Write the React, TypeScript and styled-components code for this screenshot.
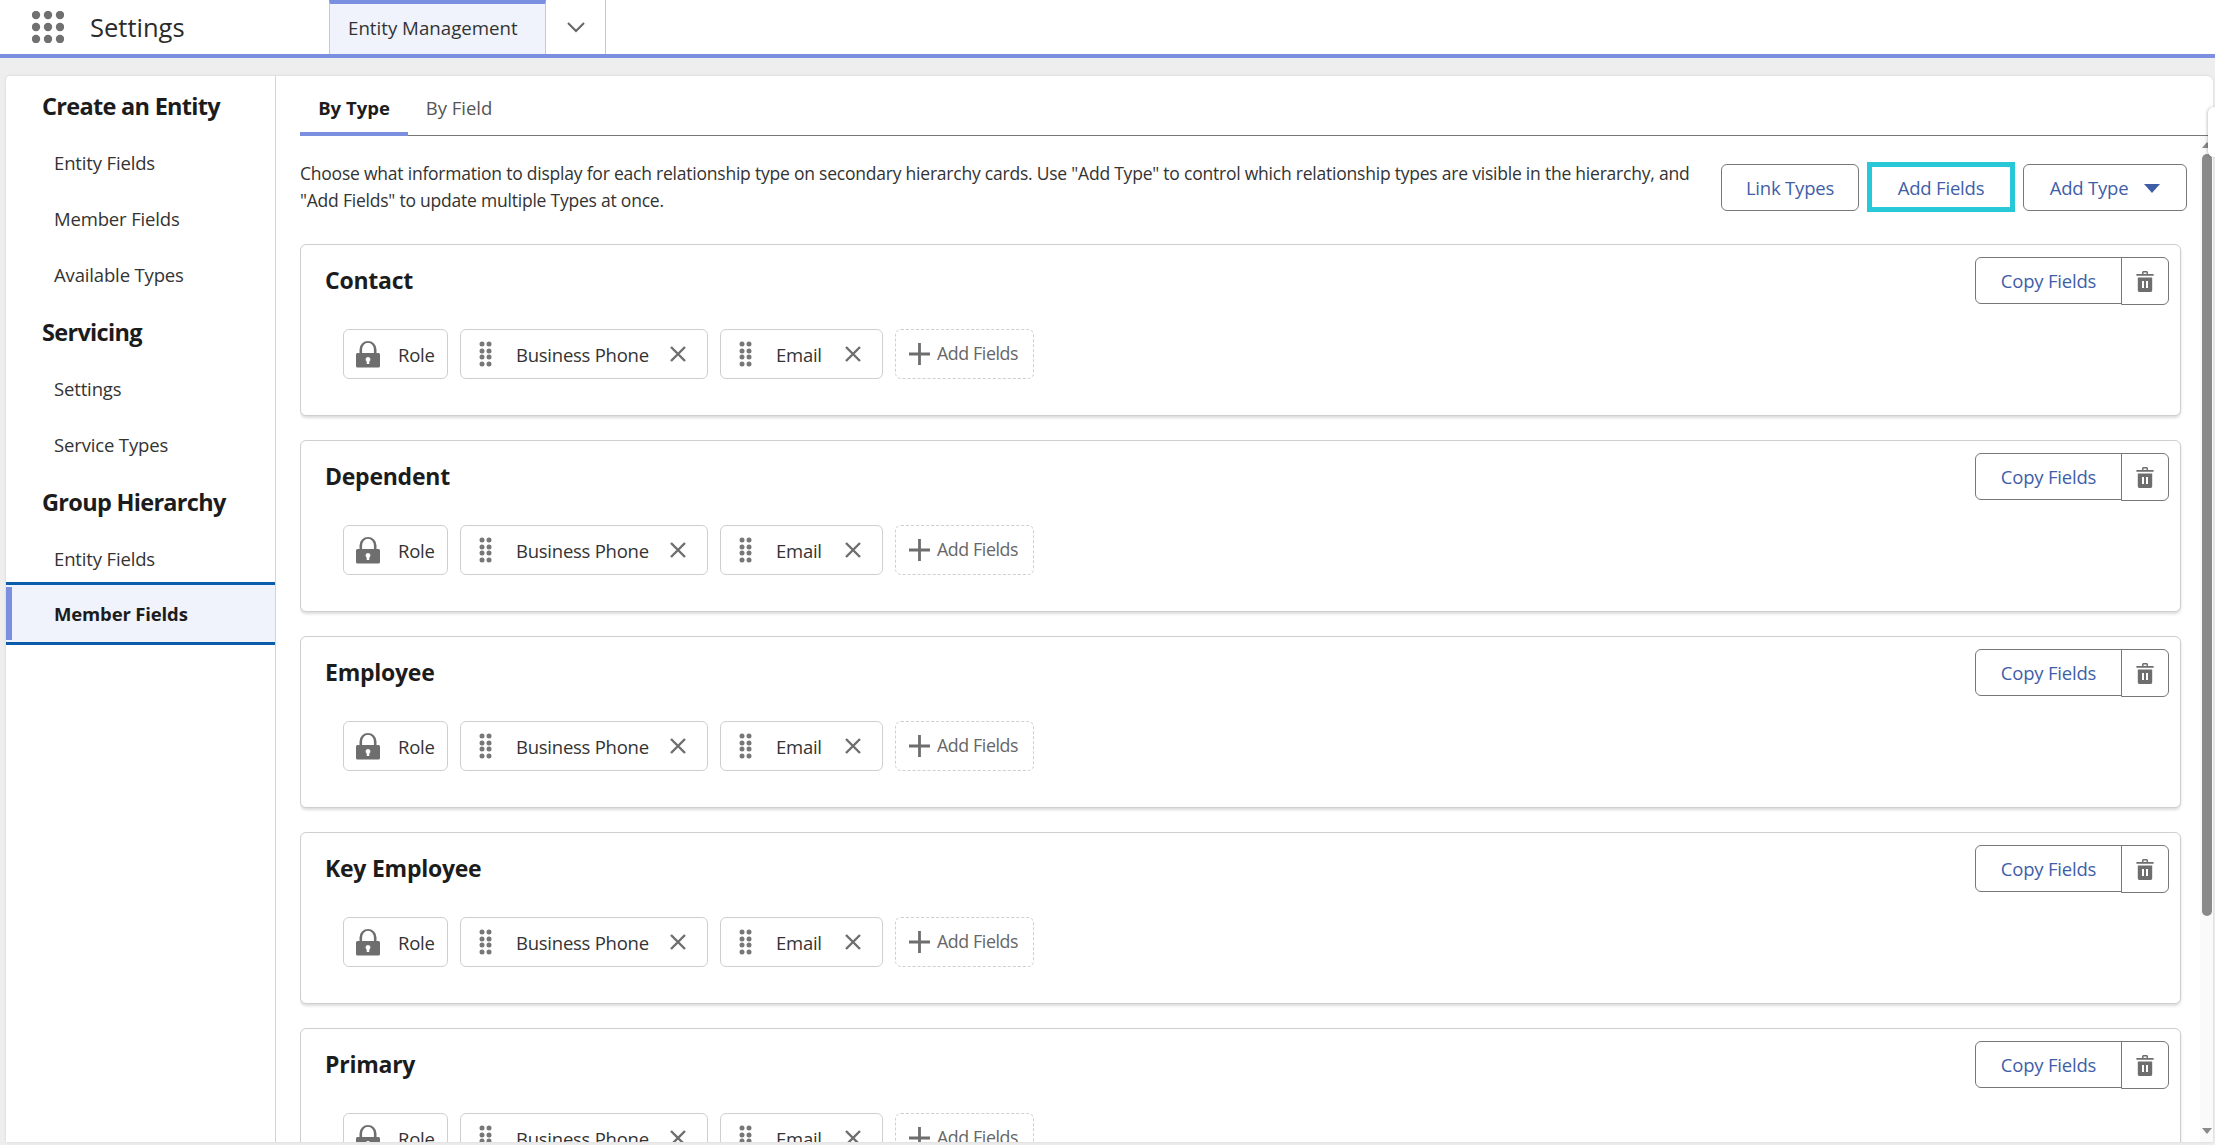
import styled, { createGlobalStyle } from 'styled-components';

const GlobalStyle = createGlobalStyle`
  html, body {
    margin: 0;
    padding: 0;
    height: 100%;
    overflow: hidden;
    background: #eeeeee;
  }
  body {
    font-family: "Open Sans", "Noto Sans", sans-serif;
    color: #222;
  }
  * {
    box-sizing: border-box;
  }
`;

const Page = styled.div`
  width: 2215px;
  height: 1145px;
  display: flex;
  flex-direction: column;
`;

const Header = styled.header`
  height: 58px;
  flex: none;
  display: flex;
  background: #fff;
  border-bottom: 4px solid #7b8fe0;
`;

const AppLauncher = styled.div`
  width: 329px;
  display: flex;
  align-items: center;
  padding-left: 32px;
  gap: 26px;
`;

const AppName = styled.span`
  font-size: 25.5px;
  color: #2b2b2b;
`;

const HeaderTab = styled.div`
  width: 217px;
  display: flex;
  align-items: center;
  padding: 0 0 4px 18px;
  font-size: 18.7px;
  color: #333;
  background: #f0f3fc;
  border-top: 4px solid #7b8fe0;
  border-left: 1px solid #c9c9c9;
  border-right: 1px solid #c9c9c9;
`;

const HeaderChevron = styled.div`
  width: 60px;
  display: flex;
  align-items: center;
  justify-content: center;
  border-right: 1px solid #c9c9c9;
  color: #666;
`;

const Body = styled.div`
  flex: 1;
  min-height: 0;
  padding: 18px 2px 3px 6px;
  display: flex;
`;

const Panel = styled.div`
  position: relative;
  flex: 1;
  min-width: 0;
  display: flex;
  background: #fff;
  border-radius: 4px 6px 0 0;
  box-shadow: 0 0 3px rgba(0, 0, 0, 0.12);
`;

const EdgeHandle = styled.div`
  position: absolute;
  top: 31px;
  right: -2px;
  width: 7px;
  height: 50px;
  background: #fff;
  border-radius: 6px 0 0 6px;
  box-shadow: -1px 0 3px rgba(0, 0, 0, 0.22);
`;

const SideNav = styled.nav`
  width: 270px;
  flex: none;
  border-right: 1px solid #d4d4d4;
  padding-top: 11px;
`;

const NavHeading = styled.div`
  height: 38px;
  display: flex;
  align-items: center;
  padding-left: 36px;
  font-size: 23.5px;
  font-weight: 700;
  letter-spacing: -0.7px;
  color: #1c1c1c;
  margin-bottom: 9px;
`;

const NavItem = styled.div<{ $active?: boolean }>`
  position: relative;
  height: ${(p) => (p.$active ? '63px' : '56px')};
  margin-top: ${(p) => (p.$active ? '-4px' : '0')};
  display: flex;
  align-items: center;
  padding-left: 48px;
  font-size: 18.5px;
  letter-spacing: -0.15px;
  font-weight: ${(p) => (p.$active ? 700 : 400)};
  color: ${(p) => (p.$active ? '#1c1c1c' : '#333')};
  background: ${(p) => (p.$active ? '#f0f3fc' : 'transparent')};
  border-top: ${(p) => (p.$active ? '3px solid #0b5cab' : 'none')};
  border-bottom: ${(p) => (p.$active ? '3px solid #0b5cab' : 'none')};
`;

const ActiveMarker = styled.span`
  position: absolute;
  left: 0;
  top: 2px;
  bottom: 2px;
  width: 6px;
  background: #7b8fe0;
`;

const NavGroup = styled.div`
  margin-bottom: 11px;
`;

const Main = styled.main`
  flex: 1;
  min-width: 0;
  display: flex;
  flex-direction: column;
  padding-left: 24px;
`;

const Tabs = styled.div`
  height: 60px;
  flex: none;
  display: flex;
  border-bottom: 1px solid #777;
`;

const Tab = styled.div<{ $active?: boolean }>`
  width: ${(p) => (p.$active ? '108px' : '102px')};
  height: ${(p) => (p.$active ? '60px' : '59px')};
  display: flex;
  align-items: flex-start;
  justify-content: center;
  padding-top: 18px;
  font-size: 18.5px;
  line-height: 28px;
  font-weight: ${(p) => (p.$active ? 700 : 400)};
  color: ${(p) => (p.$active ? '#1c1c1c' : '#555')};
  border-bottom: ${(p) => (p.$active ? '4px solid #7b8fe0' : 'none')};
`;

const ScrollArea = styled.div`
  flex: 1;
  min-height: 0;
  display: flex;
  overflow: hidden;
`;

const Content = styled.div`
  flex: 1;
  min-width: 0;
  overflow: hidden;
  padding-right: 19px;
`;

const IntroRow = styled.div`
  display: flex;
  justify-content: space-between;
  align-items: flex-start;
  padding-top: 24px;
  height: 108px;
`;

const Intro = styled.p`
  margin: 0;
  width: 1400px;
  font-size: 17.5px;
  line-height: 27px;
  letter-spacing: -0.22px;
  color: #333;
`;

const Actions = styled.div`
  display: flex;
  align-items: center;
  gap: 8px;
  margin-top: 2px;
  margin-right: -6px;
`;

const Button = styled.button<{ $width: number }>`
  width: ${(p) => p.$width}px;
  height: 47px;
  padding: 0;
  display: flex;
  align-items: center;
  justify-content: center;
  gap: 16px;
  background: #fff;
  border: 1px solid #777;
  border-radius: 6px;
  font-family: inherit;
  font-size: 18.5px;
  letter-spacing: -0.2px;
  color: #3f5ea8;
`;

const FocusedButton = styled(Button)`
  height: 50px;
  border: 5px solid #29c8d8;
  border-radius: 0;
`;

const Caret = styled.span`
  width: 0;
  height: 0;
  border-left: 8px solid transparent;
  border-right: 8px solid transparent;
  border-top: 9px solid #3f5ea8;
  margin-top: 3px;
`;

const Card = styled.section`
  height: 172px;
  margin-bottom: 24px;
  padding: 12px 11px 0 24px;
  background: #fff;
  border: 1px solid #cfcfcf;
  border-radius: 6px;
  box-shadow: 0 2px 3px rgba(0, 0, 0, 0.14);
`;

const CardHeader = styled.div`
  display: flex;
  justify-content: space-between;
  align-items: center;
  height: 48px;
`;

const CardTitle = styled.h3`
  margin: -2px 0 0;
  font-size: 23px;
  font-weight: 700;
  letter-spacing: -0.25px;
  color: #1c1c1c;
`;

const CopyGroup = styled.div`
  display: flex;
  align-items: flex-start;
`;

const CopyButton = styled(Button)`
  border-radius: 6px 0 0 6px;
`;

const TrashButton = styled.button`
  width: 48px;
  height: 48px;
  margin-left: -1px;
  padding: 0;
  display: flex;
  align-items: center;
  justify-content: center;
  background: #fff;
  border: 1px solid #777;
  border-radius: 0 6px 6px 0;
  color: #6e6e6e;
`;

const Chips = styled.div`
  display: flex;
  gap: 12px;
  margin-top: 24px;
  padding-left: 18px;
`;

const Chip = styled.div<{ $width: number; $dashed?: boolean }>`
  width: ${(p) => p.$width}px;
  height: 50px;
  display: flex;
  align-items: center;
  padding: 0 ${(p) => (p.$dashed ? '0 0 13px' : '12px')};
  border: 1px ${(p) => (p.$dashed ? 'dashed' : 'solid')} #cfcfcf;
  border-radius: 6px;
  background: #fff;
`;

const ChipLabel = styled.span`
  flex: 1;
  margin-left: 18px;
  font-size: 18.5px;
  letter-spacing: -0.25px;
  color: #333;
  white-space: nowrap;
`;

const Handle = styled.span`
  display: flex;
  margin: 0 6px;
`;

const Remove = styled.span`
  display: flex;
  margin-right: 9px;
`;

const AddLabel = styled.span`
  margin: 0 0 2px 7px;
  font-size: 17.8px;
  letter-spacing: -0.4px;
  color: #666;
  white-space: nowrap;
`;

const Scrollbar = styled.div`
  width: 13px;
  flex: none;
  display: flex;
  flex-direction: column;
  align-items: center;
  background: #fafafa;
  padding-top: 6px;
`;

const ArrowUp = styled.span`
  border-left: 5px solid transparent;
  border-right: 5px solid transparent;
  border-bottom: 6px solid #8a8a8a;
`;

const ArrowDown = styled.span`
  border-left: 5px solid transparent;
  border-right: 5px solid transparent;
  border-top: 6px solid #8a8a8a;
  margin-top: auto;
  margin-bottom: 8px;
`;

const Thumb = styled.div`
  width: 10px;
  height: 762px;
  margin-top: 6px;
  background: #8a8a8a;
  border-radius: 5px;
`;

const Grid = () => (
  <svg width="32" height="32" viewBox="0 0 32 32" fill="#707070">
    {[4, 16, 28].flatMap((y) =>
      [4, 16, 28].map((x) => <circle key={`${x}-${y}`} cx={x} cy={y} r="4.2" />),
    )}
  </svg>
);

const Chevron = () => (
  <svg width="20" height="12" viewBox="0 0 20 12" fill="none" stroke="currentColor" strokeWidth="2">
    <path d="M2 2l8 8 8-8" />
  </svg>
);

const LockIcon = () => (
  <svg width="24" height="28" viewBox="0 0 24 28" fill="#6e6e6e">
    <path d="M3.5 13V9.5a8.500 8.500 0 0 1 17 0V13h-2.600V9.500a5.900 6.800 0 0 0-11.800 0V13z" />
    <path
      fillRule="evenodd"
      d="M1.500 13h21a1.500 1.500 0 0 1 1.500 1.500v11.500a1.500 1.500 0 0 1-1.500 1.500h-21A1.500 1.500 0 0 1 0 26V14.500A1.500 1.500 0 0 1 1.500 13zm10.500 4a2.500 2.500 0 0 0-1.300 4.600V24h2.600v-2.400a2.500 2.500 0 0 0-1.300-4.600z"
    />
  </svg>
);

const DragIcon = () => (
  <svg width="13" height="26" viewBox="0 0 13 26" fill="#777">
    {[3, 10, 16, 23].flatMap((y) =>
      [3, 10].map((x) => <circle key={`${x}-${y}`} cx={x} cy={y} r="2.500" />),
    )}
  </svg>
);

const CloseIcon = () => (
  <svg width="16" height="16" viewBox="0 0 16 16" fill="none" stroke="#6e6e6e" strokeWidth="2.400">
    <path d="M1 1l14 14M15 1L1 15" />
  </svg>
);

const PlusIcon = () => (
  <svg width="21" height="22" viewBox="0 0 21 22" fill="none" stroke="#6e6e6e" strokeWidth="2.800">
    <path d="M10.500 0v22M0 11h21" />
  </svg>
);

const TrashIcon = () => (
  <svg width="18" height="21" viewBox="0 0 18 21" fill="currentColor">
    <path d="M6 3V1.600C6 .7 6.700 0 7.600 0h2.800c.9 0 1.600.7 1.600 1.600V3h5.600v1.800H.4V3zm1.500 0h3V1.500h-3z" />
    <path
      fillRule="evenodd"
      d="M1.800 6.500h14.400V19.200c0 1-.8 1.800-1.800 1.800H3.600c-1 0-1.800-.8-1.800-1.800zM6 10v7h2v-7zm4 0v7h2v-7z"
    />
  </svg>
);

const navGroups = [
  { title: 'Create an Entity', items: ['Entity Fields', 'Member Fields', 'Available Types'] },
  { title: 'Servicing', items: ['Settings', 'Service Types'] },
  { title: 'Group Hierarchy', items: ['Entity Fields', 'Member Fields'] },
];

const types = ['Contact', 'Dependent', 'Employee', 'Key Employee', 'Primary'];

const App = () => {
  return (
    <Page>
      <GlobalStyle />
      <Header>
        <AppLauncher>
          <Grid />
          <AppName>Settings</AppName>
        </AppLauncher>
        <HeaderTab>Entity Management</HeaderTab>
        <HeaderChevron>
          <Chevron />
        </HeaderChevron>
      </Header>
      <Body>
        <Panel>
          <SideNav>
            {navGroups.map((group, g) => (
              <NavGroup key={group.title}>
                <NavHeading>{group.title}</NavHeading>
                {group.items.map((item, i) => {
                  const active = g === 2 && i === 1;
                  return (
                    <NavItem key={item} $active={active}>
                      {active && <ActiveMarker />}
                      {item}
                    </NavItem>
                  );
                })}
              </NavGroup>
            ))}
          </SideNav>
          <Main>
            <Tabs>
              <Tab $active>By Type</Tab>
              <Tab>By Field</Tab>
            </Tabs>
            <ScrollArea>
              <Content>
                <IntroRow>
                  <Intro>
                    Choose what information to display for each relationship type on secondary hierarchy cards. Use
                    "Add Type" to control which relationship types are visible in the hierarchy, and "Add Fields" to
                    update multiple Types at once.
                  </Intro>
                  <Actions>
                    <Button $width={138}>Link Types</Button>
                    <FocusedButton $width={148}>Add Fields</FocusedButton>
                    <Button $width={164}>
                      Add Type
                      <Caret />
                    </Button>
                  </Actions>
                </IntroRow>
                {types.map((type) => (
                  <Card key={type}>
                    <CardHeader>
                      <CardTitle>{type}</CardTitle>
                      <CopyGroup>
                        <CopyButton $width={147}>Copy Fields</CopyButton>
                        <TrashButton>
                          <TrashIcon />
                        </TrashButton>
                      </CopyGroup>
                    </CardHeader>
                    <Chips>
                      <Chip $width={105}>
                        <LockIcon />
                        <ChipLabel>Role</ChipLabel>
                      </Chip>
                      <Chip $width={248}>
                        <Handle>
                          <DragIcon />
                        </Handle>
                        <ChipLabel>Business Phone</ChipLabel>
                        <Remove>
                          <CloseIcon />
                        </Remove>
                      </Chip>
                      <Chip $width={163}>
                        <Handle>
                          <DragIcon />
                        </Handle>
                        <ChipLabel>Email</ChipLabel>
                        <Remove>
                          <CloseIcon />
                        </Remove>
                      </Chip>
                      <Chip $width={139} $dashed>
                        <PlusIcon />
                        <AddLabel>Add Fields</AddLabel>
                      </Chip>
                    </Chips>
                  </Card>
                ))}
              </Content>
              <Scrollbar>
                <ArrowUp />
                <Thumb />
                <ArrowDown />
              </Scrollbar>
            </ScrollArea>
          </Main>
          <EdgeHandle />
        </Panel>
      </Body>
    </Page>
  );
};

export default App;
